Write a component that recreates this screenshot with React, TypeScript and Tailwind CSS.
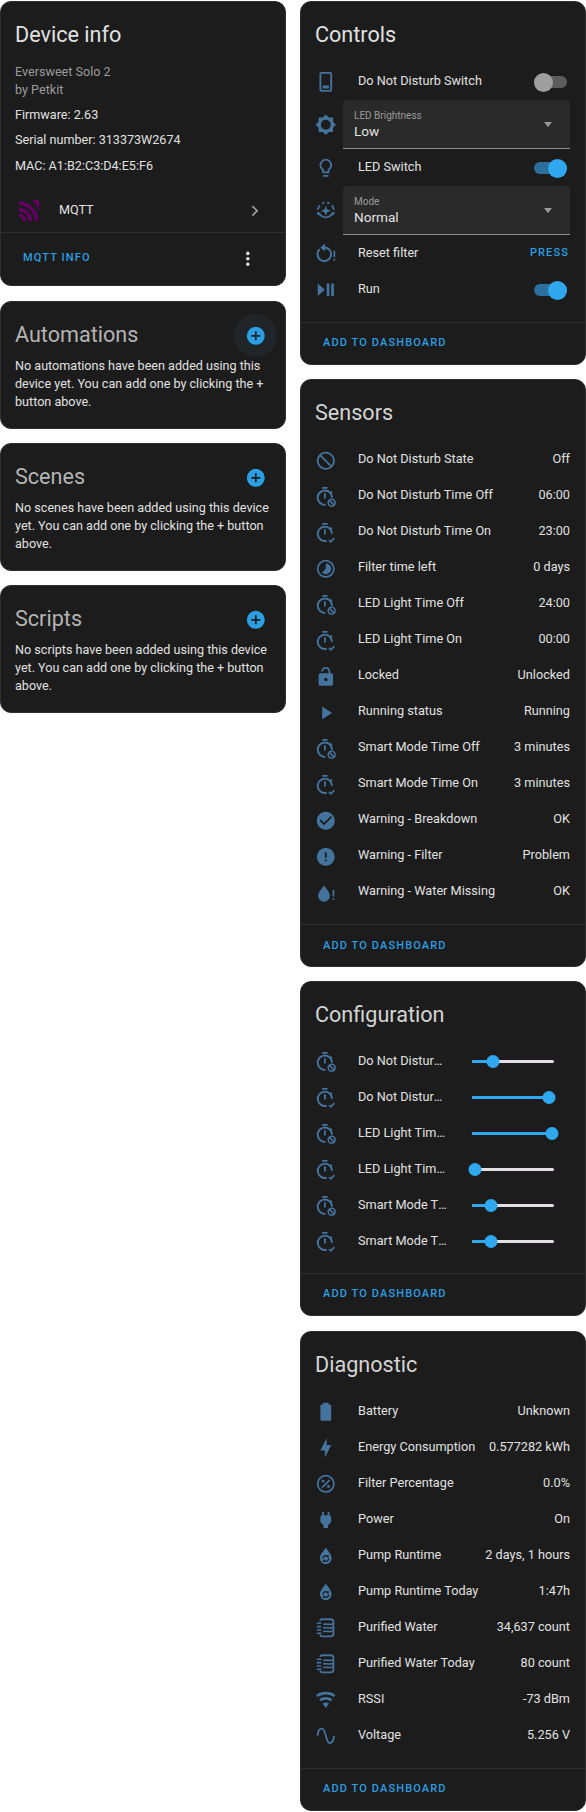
import type { ReactNode } from 'react';

const ICONS: Record<string, string> = {
    cancel: 'M12 2C17.5 2 22 6.5 22 12S17.5 22 12 22 2 17.5 2 12 6.5 2 12 2M12 4C10.1 4 8.4 4.6 7.1 5.7L18.3 16.9C19.3 15.5 20 13.8 20 12C20 7.6 16.4 4 12 4M16.9 18.3L5.7 7.1C4.6 8.4 4 10.1 4 12C4 16.4 7.6 20 12 20C13.9 20 15.6 19.4 16.9 18.3Z',
    play: 'M8,5.14V19.14L19,12.14L8,5.14Z',
    check: 'M12 2C6.5 2 2 6.5 2 12S6.5 22 12 22 22 17.5 22 12 17.5 2 12 2M10 17L5 12L6.41 10.59L10 14.17L17.59 6.58L19 8L10 17Z',
    alert: 'M13,13H11V7H13M13,17H11V15H13M12,2A10,10 0 0,0 2,12A10,10 0 0,0 12,22A10,10 0 0,0 22,12A10,10 0 0,0 12,2Z',
    lock: 'M18,8A2,2 0 0,1 20,10V20A2,2 0 0,1 18,22H6C4.89,22 4,21.1 4,20V10A2,2 0 0,1 6,8H15V6A3,3 0 0,0 12,3A3,3 0 0,0 9,6H7A5,5 0 0,1 12,1A5,5 0 0,1 17,6V8H18M12,17A2,2 0 0,0 14,15A2,2 0 0,0 12,13A2,2 0 0,0 10,15A2,2 0 0,0 12,17Z',
    battery: 'M16.67,4H15V2H9V4H7.33A1.33,1.33 0 0,0 6,5.33V20.67C6,21.4 6.6,22 7.33,22H16.67A1.33,1.33 0 0,0 18,20.67V5.33C18,4.6 17.4,4 16.67,4Z',
    bolt: 'M11 15H6L13 1V9H18L11 23V15Z',
    plug: 'M16,7V3H14V7H10V3H8V7C7,7 6,8 6,9V14.5L9.5,18V21H14.5V18L18,14.5V9C18,8 17,7 16,7Z',
    wifi: 'M12,21L15.6,16.2C14.6,15.45 13.35,15 12,15C10.65,15 9.4,15.45 8.4,16.2L12,21M12,3C7.95,3 4.21,4.34 1.2,6.6L3,9C5.5,7.12 8.62,6 12,6C15.38,6 18.5,7.12 21,9L22.8,6.6C19.79,4.34 16.05,3 12,3M12,9C9.3,9 6.81,9.89 4.8,11.4L6.6,13.8C8.1,12.67 9.97,12 12,12C14.03,12 15.9,12.67 17.4,13.8L19.2,11.4C17.19,9.89 14.7,9 12,9Z',
    sine: 'M16.5,21C13.5,21 12.31,16.76 11.05,12.28C10.14,9.04 9,5 7.5,5C4.11,5 4,11.93 4,12H2C2,11.63 2.06,3 7.5,3C10.5,3 11.71,7.25 12.97,11.74C13.83,14.8 15,19 16.5,19C19.94,19 20.03,12.07 20.03,12H22.03C22.03,12.37 21.97,21 16.5,21Z',
    bulb: 'M12,2A7,7 0 0,1 19,9C19,11.38 17.81,13.47 16,14.74V17A1,1 0 0,1 15,18H9A1,1 0 0,1 8,17V14.74C6.19,13.47 5,11.38 5,9A7,7 0 0,1 12,2M9,21V20H15V21A1,1 0 0,1 14,22H10A1,1 0 0,1 9,21M12,4A5,5 0 0,0 7,9C7,11.05 8.23,12.81 10,13.58V16H14V13.58C15.77,12.81 17,11.05 17,9A5,5 0 0,0 12,4Z',
    playPause: 'M3,5V19L11,12M13,19H16V5H13M18,5V19H21V5',
    timelapse: 'M16.24,7.76C15.07,6.59 13.54,6 12,6V12L7.76,16.24C10.1,18.58 13.9,18.58 16.25,16.24C18.59,13.9 18.59,10.1 16.24,7.76M12,2A10,10 0 0,0 2,12A10,10 0 0,0 12,22A10,10 0 0,0 22,12A10,10 0 0,0 12,2M12,20A8,8 0 0,1 4,12A8,8 0 0,1 12,4A8,8 0 0,1 20,12A8,8 0 0,1 12,20Z',
    brightness: 'M12,6.5A5.5,5.5 0 0,0 6.5,12A5.5,5.5 0 0,0 12,17.5A5.5,5.5 0 0,0 17.5,12A5.5,5.5 0 0,0 12,6.5M20,15.31L23.31,12L20,8.69V4H15.31L12,0.69L8.69,4H4V8.69L0.69,12L4,15.31V20H8.69L12,23.31L15.31,20H20V15.31Z',
    phone: 'M17 1H7A2 2 0 0 0 5 3V21A2 2 0 0 0 7 23H17A2 2 0 0 0 19 21V3A2 2 0 0 0 17 1M17 21H7V3H17V21M8.5 16H15.5V19.5H8.5Z',
    dots: 'M12,16A2,2 0 0,1 14,18A2,2 0 0,1 12,20A2,2 0 0,1 10,18A2,2 0 0,1 12,16M12,10A2,2 0 0,1 14,12A2,2 0 0,1 12,14A2,2 0 0,1 10,12A2,2 0 0,1 12,10M12,4A2,2 0 0,1 14,6A2,2 0 0,1 12,8A2,2 0 0,1 10,6A2,2 0 0,1 12,4Z',
    plus: 'M17,13H13V17H11V13H7V11H11V7H13V11H17M12,2A10,10 0 0,0 2,12A10,10 0 0,0 12,22A10,10 0 0,0 22,12A10,10 0 0,0 12,2Z',
    chevron: 'M8.59,16.58L13.17,12L8.59,7.41L10,6L16,12L10,18L8.59,16.58Z',
};

function Svg({ children, className = 'text-[#44739e]' }: { children: ReactNode; className?: string }) {
    return (
        <svg viewBox="0 0 24 24" fill="currentColor" className={`w-[21.6px] h-[21.6px] shrink-0 ${className}`}>
            {children}
        </svg>
    );
}

function Timer({ kind }: { kind: 'off' | 'on' }) {
    return (
        <Svg>
            <path d="M8 1h6v2H8zM10 8h2v6h-2z" />
            <path d="M18 5.600l-1.500 1.500 1.500 1.500 1.500-1.500z" />
            <path
                d={kind === 'off' ? 'M11.500 21A8 8 0 1 1 19 13' : 'M13 20.900A8 8 0 1 1 19 13'}
                fill="none"
                stroke="currentColor"
                strokeWidth="2.200"
            />
            {kind === 'off' ? (
                <g fill="none" stroke="currentColor" strokeWidth="1.800">
                    <circle cx="18.500" cy="18.500" r="3.800" />
                    <path d="M16 16l5 5" />
                </g>
            ) : (
                <path d="M15.500 20l2 2 4-4" fill="none" stroke="currentColor" strokeWidth="1.800" />
            )}
        </Svg>
    );
}

function ModeIcon() {
    return (
        <Svg>
            <path d="M3 11a9 9 0 0 1 2.500-5M8 3.600a9 9 0 0 1 2.500-.6M13.500 3a9 9 0 0 1 2.500.6M18.500 6a9 9 0 0 1 2.500 5" fill="none" stroke="currentColor" strokeWidth="2" />
            <path d="M3.800 15.500a9.500 9.500 0 0 0 16.400 0l-1.700-1a7.500 7.500 0 0 1-13 0z" />
            <path d="M1.500 13.500l4.800.4-2.600 3.500zM22.500 13.500l-4.800.4 2.600 3.500z" />
            <path d="M12 6.500l1.500 4 4 1.500-4 1.500-1.500 4-1.500-4-4-1.500 4-1.500z" />
        </Svg>
    );
}

function RestartIcon() {
    return (
        <Svg>
            <g transform="translate(0 -1.500)">
                <path d="M5.200 8.500A7.500 7.500 0 1 0 10.500 6.500" fill="none" stroke="currentColor" strokeWidth="2.200" />
                <path d="M11 2v9L6 6.500z" />
                <path d="M20.500 10h2v7h-2zM20.500 19h2v2h-2z" />
            </g>
        </Svg>
    );
}

function PercentIcon() {
    return (
        <Svg>
            <circle cx="12" cy="12" r="9" fill="none" stroke="currentColor" strokeWidth="2" />
            <path d="M15.500 7.100l1.400 1.400-8.400 8.400-1.400-1.400z" />
            <circle cx="9" cy="9" r="1.600" />
            <circle cx="15" cy="15" r="1.600" />
        </Svg>
    );
}

function WaterAlertIcon() {
    return (
        <Svg>
            <path d="M10 4c-3 4-6.500 7.600-6.500 11.500a6.500 6.500 0 0 0 13 0C16.500 11.600 13 8 10 4z" />
            <path d="M19.500 9h2v7h-2zM19.500 18h2v2h-2z" />
        </Svg>
    );
}

function PumpIcon() {
    return (
        <Svg>
            <path d="M12 3c-3 4-6.500 7.500-6.500 11.800a6.500 6.500 0 0 0 13 0C18.500 10.500 15 7 12 3z" />
            <g fill="none" stroke="#1c1c1c" strokeWidth="1.500">
                <path d="M8.800 15a3.200 3.200 0 0 1 5.400-2.300" />
                <path d="M15.200 15a3.200 3.200 0 0 1-5.400 2.300" />
            </g>
            <path d="M15.200 10.700v3h-3zM8.800 19.300v-3h3z" fill="#1c1c1c" />
        </Svg>
    );
}

function PurifiedIcon() {
    return (
        <Svg>
            <path d="M6 4.500a2 2 0 0 1 2-2h9.500a3 3 0 0 1 3 3v13a3 3 0 0 1-3 3H8a2 2 0 0 1-2-2" fill="none" stroke="currentColor" strokeWidth="2" />
            <path d="M2 7h5M2 10.700h5M2 14.400h5M2 18h5" fill="none" stroke="currentColor" strokeWidth="1.700" />
            <path d="M9 8.500c2.500-2 4.500 1 11.500-1M9 12.500c2.500-2 4.500 1 11.500-1M9 16.500c2.500-2 4.500 1 11.500-1" fill="none" stroke="currentColor" strokeWidth="1.800" />
        </Svg>
    );
}

function MdiIcon({ name, className }: { name: string; className?: string }) {
    return (
        <Svg className={className}>
            <path fillRule="evenodd" d={ICONS[name]} />
        </Svg>
    );
}

function MqttLogo() {
    return (
        <svg viewBox="0 0 22 22" className="w-[21px] h-[21px] shrink-0 text-[#660066]" fill="none" stroke="currentColor">
            <path d="M0 3.500C10 3.500 18.500 12 18.500 22" strokeWidth="3.600" />
            <path d="M0 10c6.600 0 12 5.400 12 12" strokeWidth="3.600" />
            <path d="M0 16c3.300 0 6 2.700 6 6" strokeWidth="3.600" />
            <path d="M14 0h7v12c-1.500-4.500-3.500-8-7-12z" fill="currentColor" stroke="none" />
        </svg>
    );
}

function Card({ title, children, action, dim, className = '' }: { title: string; children: ReactNode; action?: ReactNode; dim?: boolean; className?: string }) {
    return (
        <div className={`bg-[#1c1c1c] border border-[#2e2e2e] rounded-[11px] overflow-hidden ${className}`}>
            <div className={`h-[62px] px-[14px] pt-[17px] text-[21.6px] leading-[32px] ${dim ? 'text-[#d4d4d4]' : 'text-[#e1e1e1]'}`}>{title}</div>
            {children}
            {action}
        </div>
    );
}

function AddAction() {
    return (
        <div className="border-t border-[#2f2f2f] h-[42px] pl-[22px] flex items-center text-[11px] font-medium tracking-[1.12px] text-[#2b9fe3]">
            ADD TO DASHBOARD
        </div>
    );
}

function Row({ icon, label, children }: { icon: ReactNode; label: string; children?: ReactNode }) {
    return (
        <div className="h-[36px] flex items-center">
            <div className="w-[43px] shrink-0 -ml-[1px] flex">{icon}</div>
            <div className="grow min-w-0 text-[12.7px] leading-[18px] whitespace-nowrap text-[#e1e1e1] -mt-[2px]">{label}</div>
            {children}
        </div>
    );
}

function Toggle({ on }: { on: boolean }) {
    return (
        <div className={`relative w-[33px] h-[12px] mr-[3px] rounded-full ${on ? 'bg-[#2c6f9c]' : 'bg-[#5c5c5c]'}`}>
            <div className={`absolute -top-[3.5px] w-[19px] h-[19px] rounded-full ${on ? 'right-0 bg-[#2fa8f0]' : 'left-0 bg-[#9e9e9e]'}`} />
        </div>
    );
}

function SelectRow({ icon, label, value }: { icon: ReactNode; label: string; value: string }) {
    return (
        <div className="flex items-center">
            <div className="w-[28px] shrink-0 -ml-[1px] flex">{icon}</div>
            <div className="grow h-[49px] bg-[#2a2a2a] rounded-t-[4px] border-b border-[#8c8c8c] relative pl-[11px] pt-[8px]">
                <div className="text-[10px] leading-[16px] text-[#9b9b9b]">{label}</div>
                <div className="text-[13.6px] leading-[16px] text-[#e1e1e1] -mt-[1px]">{value}</div>
                <div className="absolute right-[18px] top-[22px] border-x-[4.5px] border-x-transparent border-t-[5px] border-t-[#9b9b9b]" />
            </div>
        </div>
    );
}

function Value({ children }: { children: ReactNode }) {
    return <div className="shrink-0 text-[12.7px] leading-[18px] text-[#e1e1e1] whitespace-nowrap -mt-[2px]">{children}</div>;
}

function Slider({ pos }: { pos: number }) {
    return (
        <div className="relative w-[82px] h-[3px] bg-[#e4e0e6] rounded-full shrink-0 ml-[24px]">
            <div className="absolute left-0 top-0 h-full bg-[#2fa8f0] rounded-full" style={{ width: pos }} />
            <div
                className="absolute -top-[5px] w-[13px] h-[13px] rounded-full bg-[#2fa8f0] -translate-x-1/2"
                style={{ left: pos }}
            />
        </div>
    );
}

function EmptyCard({ title, text, halo }: { title: string; text: string; halo?: boolean }) {
    return (
        <div className="relative bg-[#1c1c1c] border border-[#2e2e2e] rounded-[11px] h-[127.6px] px-[14px] pt-[17px]">
            <div className="text-[21.6px] leading-[32px] text-[#b4b4b4]">{title}</div>
            <div className="mt-[6px] text-[12.6px] leading-[18px] text-[#e1e1e1]">{text}</div>
            <div className="absolute right-[8px] top-[12px] w-[43px] h-[43px] rounded-full flex items-center justify-center">
                {halo && <div className="absolute inset-0 rounded-full bg-[#1f2529]" />}
                <MdiIcon name="plus" className="text-[#2b9fe3] relative" />
            </div>
        </div>
    );
}

const sensors: [ReactNode, string, string][] = [
    [<MdiIcon name="cancel" />, 'Do Not Disturb State', 'Off'],
    [<Timer kind="off" />, 'Do Not Disturb Time Off', '06:00'],
    [<Timer kind="on" />, 'Do Not Disturb Time On', '23:00'],
    [<MdiIcon name="timelapse" />, 'Filter time left', '0 days'],
    [<Timer kind="off" />, 'LED Light Time Off', '24:00'],
    [<Timer kind="on" />, 'LED Light Time On', '00:00'],
    [<MdiIcon name="lock" />, 'Locked', 'Unlocked'],
    [<MdiIcon name="play" />, 'Running status', 'Running'],
    [<Timer kind="off" />, 'Smart Mode Time Off', '3 minutes'],
    [<Timer kind="on" />, 'Smart Mode Time On', '3 minutes'],
    [<MdiIcon name="check" />, 'Warning - Breakdown', 'OK'],
    [<MdiIcon name="alert" />, 'Warning - Filter', 'Problem'],
    [<WaterAlertIcon />, 'Warning - Water Missing', 'OK'],
];

const sliders: ['off' | 'on', string, number][] = [
    ['off', 'Do Not Disturb Time Off', 21],
    ['on', 'Do Not Disturb Time On', 77],
    ['off', 'LED Light Time Off', 80],
    ['on', 'LED Light Time On', 3],
    ['off', 'Smart Mode Time Off', 19],
    ['on', 'Smart Mode Time On', 19],
];

const diagnostics: [ReactNode, string, string][] = [
    [<MdiIcon name="battery" />, 'Battery', 'Unknown'],
    [<MdiIcon name="bolt" />, 'Energy Consumption', '0.577282 kWh'],
    [<PercentIcon />, 'Filter Percentage', '0.0%'],
    [<MdiIcon name="plug" />, 'Power', 'On'],
    [<PumpIcon />, 'Pump Runtime', '2 days, 1 hours'],
    [<PumpIcon />, 'Pump Runtime Today', '1:47h'],
    [<PurifiedIcon />, 'Purified Water', '34,637 count'],
    [<PurifiedIcon />, 'Purified Water Today', '80 count'],
    [<MdiIcon name="wifi" />, 'RSSI', '-73 dBm'],
    [<MdiIcon name="sine" />, 'Voltage', '5.256 V'],
];

export default function App() {
    return (
        <div className="w-[586px] h-[1812px] bg-white pt-px flex gap-[14px] font-['Roboto',sans-serif]">
            {/* Left column */}
            <div className="w-[286px] flex flex-col gap-[14.4px]">
                <div className="bg-[#1c1c1c] border border-[#2e2e2e] rounded-[11px] h-[285px] mb-px overflow-hidden">
                    <div className="h-[61px] px-[14px] pt-[17px] text-[21.6px] leading-[32px] text-[#e1e1e1]">Device info</div>
                    <div className="px-[14px] text-[12.6px] leading-[18px]">
                        <div className="text-[#9b9b9b]">Eversweet Solo 2</div>
                        <div className="text-[#9b9b9b]">by Petkit</div>
                        <div className="mt-[7px] text-[#e1e1e1]">Firmware: 2.63</div>
                        <div className="mt-[7px] text-[#e1e1e1]">Serial number: 313373W2674</div>
                        <div className="mt-[8px] text-[#e1e1e1]">MAC: A1:B2:C3:D4:E5:F6</div>
                    </div>
                    <div className="h-[43px] mt-[14px] pl-[18px] pr-[19px] flex items-center text-[12.6px] text-[#e1e1e1]">
                        <MqttLogo />
                        <span className="ml-[19px] grow">MQTT</span>
                        <MdiIcon name="chevron" className="text-[#9b9b9b]" />
                    </div>
                    <div className="border-t border-[#2f2f2f] h-[52px] pl-[22px] pr-[26px] flex items-center justify-between text-[11px] font-medium tracking-[1.12px] text-[#2b9fe3]">
                        MQTT INFO
                        <MdiIcon name="dots" className="text-[#e1e1e1]" />
                    </div>
                </div>
                <EmptyCard title="Automations" halo text="No automations have been added using this device yet. You can add one by clicking the + button above." />
                <EmptyCard title="Scenes" text="No scenes have been added using this device yet. You can add one by clicking the + button above." />
                <EmptyCard title="Scripts" text="No scripts have been added using this device yet. You can add one by clicking the + button above." />
            </div>

            {/* Right column */}
            <div className="w-[286px] flex flex-col gap-[14.4px]">
                <Card title="Controls" action={<AddAction />}>
                    <div className="px-[15px] pb-[14px]">
                        <Row icon={<MdiIcon name="phone" />} label="Do Not Disturb Switch"><Toggle on={false} /></Row>
                        <SelectRow icon={<MdiIcon name="brightness" />} label="LED Brightness" value="Low" />
                        <div className="mt-px">
                            <Row icon={<MdiIcon name="bulb" />} label="LED Switch"><Toggle on /></Row>
                        </div>
                        <SelectRow icon={<ModeIcon />} label="Mode" value="Normal" />
                        <div className="mt-px">
                            <Row icon={<RestartIcon />} label="Reset filter">
                                <span className="text-[11px] font-medium tracking-[1.12px] text-[#2b9fe3] pr-[1px] -mt-[2px]">PRESS</span>
                            </Row>
                        </div>
                        <Row icon={<MdiIcon name="playPause" />} label="Run"><Toggle on /></Row>
                    </div>
                </Card>
                <Card title="Sensors" dim action={<AddAction />}>
                    <div className="px-[15px] pb-[14px]">
                        {sensors.map(([icon, label, value]) => (
                            <Row key={label} icon={icon} label={label}><Value>{value}</Value></Row>
                        ))}
                    </div>
                </Card>
                <Card title="Configuration" dim className="-mt-px" action={<AddAction />}>
                    <div className="px-[15px] pb-[13px]">
                        {sliders.map(([kind, label, pos]) => (
                            <div key={label} className="h-[36px] flex items-center">
                                <div className="w-[43px] shrink-0 -ml-[1px] flex"><Timer kind={kind} /></div>
                                <div className="w-[90px] shrink-0 truncate text-[12.7px] leading-[18px] text-[#e1e1e1] -mt-[2px]">{label}</div>
                                <Slider pos={pos} />
                            </div>
                        ))}
                    </div>
                </Card>
                <Card title="Diagnostic" dim className="mt-px" action={<AddAction />}>
                    <div className="px-[15px] pb-[14px]">
                        {diagnostics.map(([icon, label, value]) => (
                            <Row key={label} icon={icon} label={label}><Value>{value}</Value></Row>
                        ))}
                    </div>
                </Card>
            </div>
        </div>
    );
}
